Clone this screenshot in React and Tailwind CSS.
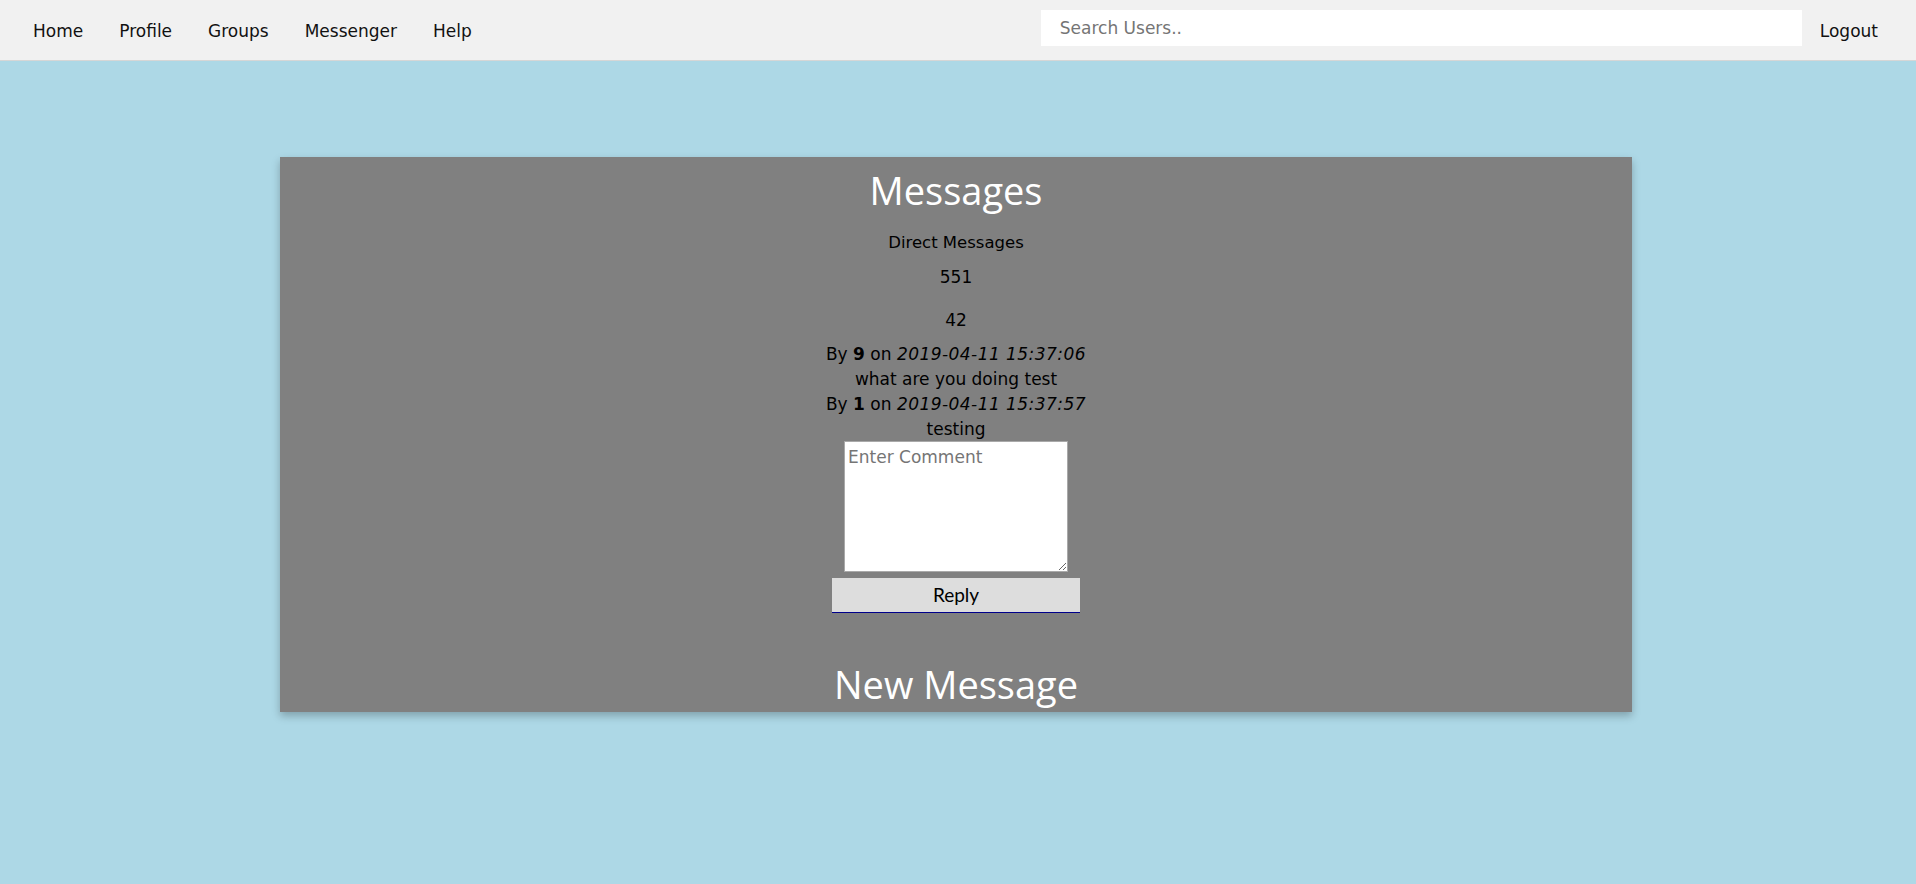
import { useState } from 'react';

const navLinks = ['Home', 'Profile', 'Groups', 'Messenger', 'Help'];

const messages = [
  { author: '9', date: '2019-04-11 15:37:06', body: 'what are you doing test' },
  { author: '1', date: '2019-04-11 15:37:57', body: 'testing' },
];

const App = () => {
  const [comment, setComment] = useState('');
  const [search, setSearch] = useState('');

  return (
    <div className="min-h-screen bg-[#add8e6] font-['DejaVu_Sans',Verdana,sans-serif] text-black">
      {/* Top nav */}
      <nav className="h-[61px] bg-[#f1f1f1] border-b border-[#d6d6d6] flex items-center pl-[15px] pr-[20px]">
        {navLinks.map((link) => (
          <a key={link} href="#" className="px-[18px] pt-[2px] text-[17px] leading-[60px] text-[#111]">
            {link}
          </a>
        ))}
        <div className="ml-auto flex items-center">
          <input
            value={search}
            onChange={(e) => setSearch(e.target.value)}
            placeholder="Search Users.."
            className="mb-[4px] w-[761px] h-[36px] bg-white pl-[19px] text-[17px] outline-none placeholder:text-[#757575]"
          />
          <a href="#" className="px-[18px] pt-[2px] text-[17px] leading-[60px] text-[#111]">
            Logout
          </a>
        </div>
      </nav>

      {/* Messages card */}
      <div className="pt-[96px] pr-[4px]">
        <div className="w-[1352px] h-[555px] mx-auto bg-[#808080] shadow-[0_4px_8px_rgba(0,0,0,0.25)] flex flex-col items-center pt-[9px] overflow-hidden">
          <h1 className="font-['Open_Sans',sans-serif] text-[38px] leading-[48px] text-white">Messages</h1>
          <p className="mt-[17px] text-[16.5px] leading-[24px]">Direct Messages</p>
          <p className="mt-[10px] text-[17px] leading-[25px]">551</p>
          <p className="mt-[18px] text-[17px] leading-[25px]">42</p>
          <div className="mt-[9px] text-center text-[17px] leading-[25px]">
            {messages.map((m) => (
              <div key={m.date}>
                <div>
                  By <b>{m.author}</b> on <i className="tracking-[0.45px]">{m.date}</i>
                </div>
                <div>{m.body}</div>
              </div>
            ))}
          </div>
          <textarea
            value={comment}
            onChange={(e) => setComment(e.target.value)}
            placeholder="Enter Comment"
            className="-mt-[1px] w-[224px] h-[131px] bg-white border border-[#a9a9a9] px-[3px] pt-[4px] text-[17px] leading-[22px] placeholder:text-[#757575] outline-none"
          />
          <button className="mt-[6px] w-[248px] h-[35px] bg-[#dddddd] border-b border-[#00008b] font-['Lato',sans-serif] text-[19px] text-black">
            Reply
          </button>
          <h1 className="mt-[47px] font-['Open_Sans',sans-serif] text-[38px] leading-[48px] text-white">New Message</h1>
        </div>
      </div>
    </div>
  );
};

export default App;
